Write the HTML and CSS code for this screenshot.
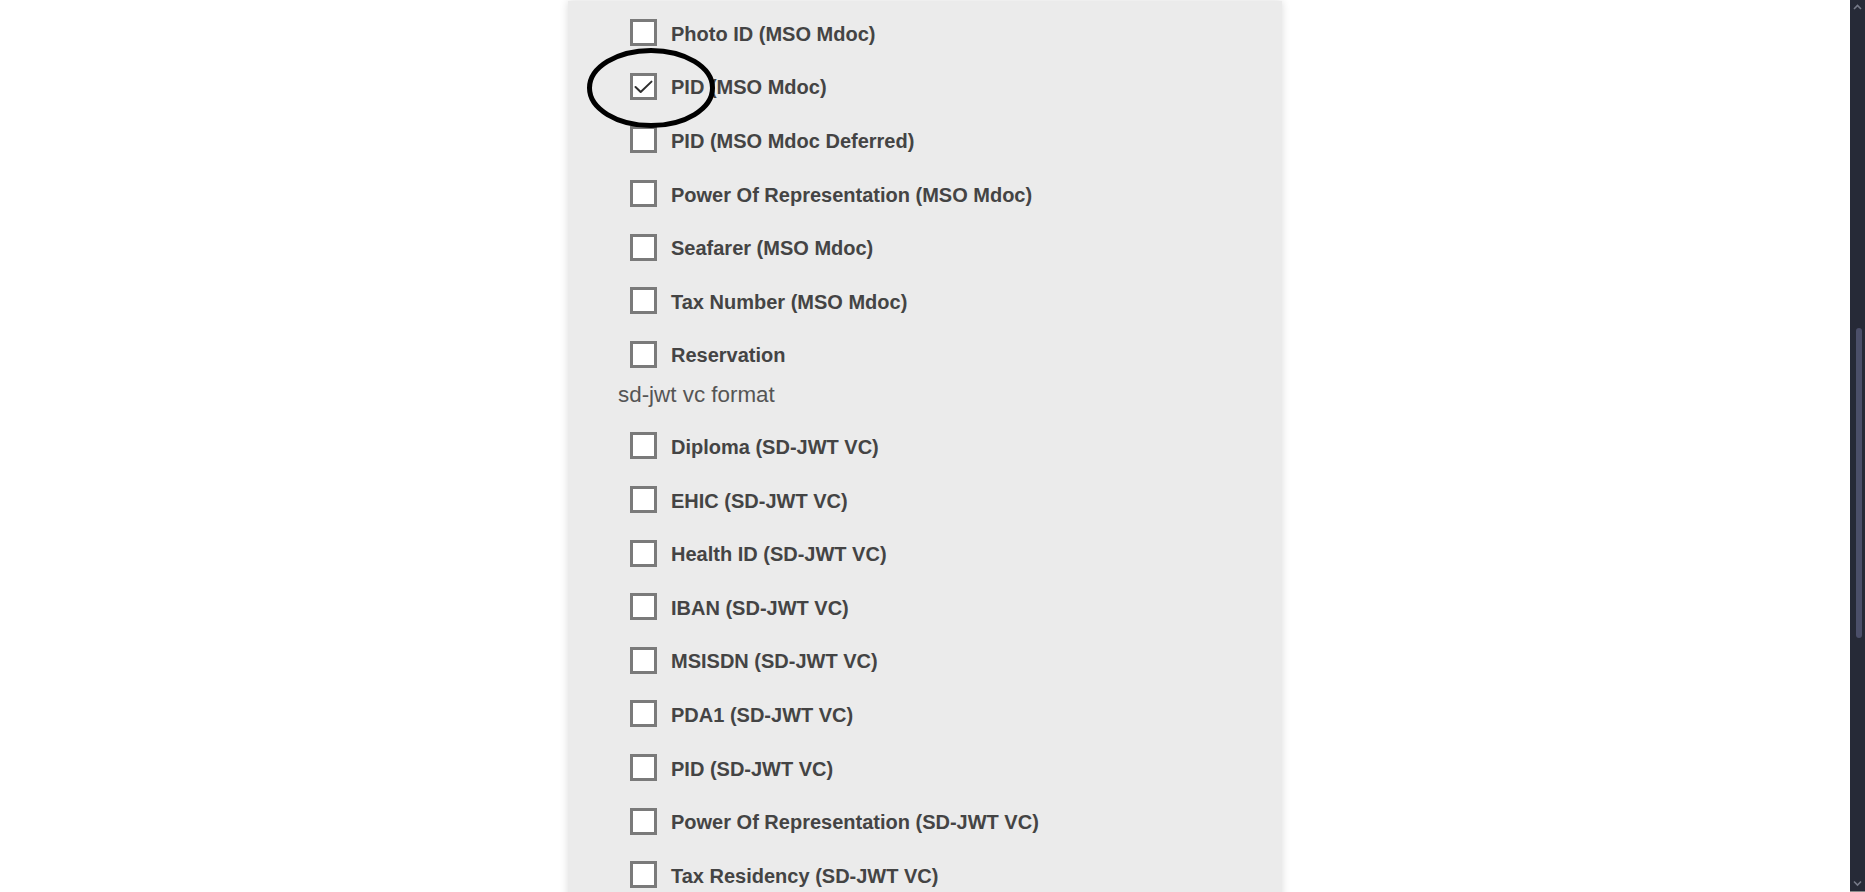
FILE: index.html
```html
<!DOCTYPE html>
<html lang="en">
<head>
<meta charset="utf-8">
<title>Credential selection</title>
<link rel="stylesheet" href="styles.css">
</head>
<body>
<main class="main">
  <section class="panel">
    <div class="row"><svg class="cb" viewBox="0 0 27 27"><rect x="1.5" y="1.5" width="24" height="24"/></svg><span class="lbl">Photo ID (MSO Mdoc)</span></div>
    <div class="row"><svg class="cb" viewBox="0 0 27 27"><rect x="1.5" y="1.5" width="24" height="24"/><polyline class="tick" points="5.5,14 10.7,19 21.5,8.6"/></svg><span class="lbl">PID (MSO Mdoc)</span></div>
    <div class="row"><svg class="cb" viewBox="0 0 27 27"><rect x="1.5" y="1.5" width="24" height="24"/></svg><span class="lbl">PID (MSO Mdoc Deferred)</span></div>
    <div class="row"><svg class="cb" viewBox="0 0 27 27"><rect x="1.5" y="1.5" width="24" height="24"/></svg><span class="lbl">Power Of Representation (MSO Mdoc)</span></div>
    <div class="row"><svg class="cb" viewBox="0 0 27 27"><rect x="1.5" y="1.5" width="24" height="24"/></svg><span class="lbl">Seafarer (MSO Mdoc)</span></div>
    <div class="row"><svg class="cb" viewBox="0 0 27 27"><rect x="1.5" y="1.5" width="24" height="24"/></svg><span class="lbl">Tax Number (MSO Mdoc)</span></div>
    <div class="row"><svg class="cb" viewBox="0 0 27 27"><rect x="1.5" y="1.5" width="24" height="24"/></svg><span class="lbl">Reservation</span></div>
    <p class="fmt">sd-jwt vc format</p>
    <div class="row"><svg class="cb" viewBox="0 0 27 27"><rect x="1.5" y="1.5" width="24" height="24"/></svg><span class="lbl">Diploma (SD-JWT VC)</span></div>
    <div class="row"><svg class="cb" viewBox="0 0 27 27"><rect x="1.5" y="1.5" width="24" height="24"/></svg><span class="lbl">EHIC (SD-JWT VC)</span></div>
    <div class="row"><svg class="cb" viewBox="0 0 27 27"><rect x="1.5" y="1.5" width="24" height="24"/></svg><span class="lbl">Health ID (SD-JWT VC)</span></div>
    <div class="row"><svg class="cb" viewBox="0 0 27 27"><rect x="1.5" y="1.5" width="24" height="24"/></svg><span class="lbl">IBAN (SD-JWT VC)</span></div>
    <div class="row"><svg class="cb" viewBox="0 0 27 27"><rect x="1.5" y="1.5" width="24" height="24"/></svg><span class="lbl">MSISDN (SD-JWT VC)</span></div>
    <div class="row"><svg class="cb" viewBox="0 0 27 27"><rect x="1.5" y="1.5" width="24" height="24"/></svg><span class="lbl">PDA1 (SD-JWT VC)</span></div>
    <div class="row"><svg class="cb" viewBox="0 0 27 27"><rect x="1.5" y="1.5" width="24" height="24"/></svg><span class="lbl">PID (SD-JWT VC)</span></div>
    <div class="row"><svg class="cb" viewBox="0 0 27 27"><rect x="1.5" y="1.5" width="24" height="24"/></svg><span class="lbl">Power Of Representation (SD-JWT VC)</span></div>
    <div class="row"><svg class="cb" viewBox="0 0 27 27"><rect x="1.5" y="1.5" width="24" height="24"/></svg><span class="lbl">Tax Residency (SD-JWT VC)</span></div>
    <svg class="mark" viewBox="0 0 128 80"><ellipse cx="64" cy="40" rx="61.5" ry="37.5"/></svg>
  </section>
</main>
<aside class="scrollbar">
  <div class="sb-btn"><svg viewBox="0 0 15 15"><polyline points="4,9 7.5,5.5 11,9"/></svg></div>
  <div class="sb-track"><div class="sb-thumb"></div></div>
  <div class="sb-btn"><svg viewBox="0 0 15 15"><polyline points="4,5.5 7.5,9 11,5.5"/></svg></div>
</aside>
</body>
</html>
```
FILE: styles.css
```css
html, body {
  margin: 0;
  padding: 0;
}
body {
  height: 892px;
  overflow: hidden;
  display: flex;
  background: #fff;
  font-family: "Liberation Sans", Arial, sans-serif;
}
.main {
  flex: 1;
  display: flex;
  justify-content: center;
  align-items: flex-start;
}
.panel {
  position: relative;
  width: 714px;
  margin-top: 1px;
  padding: 6.5px 0 60px 50px;
  box-sizing: border-box;
  background: #ebebeb;
  box-shadow: 0 0 8px rgba(0, 0, 0, 0.14);
}
.row {
  display: flex;
  align-items: center;
  gap: 14px;
  height: 53.6px;
  padding-left: 12px;
}
.cb {
  flex: none;
  width: 27px;
  height: 27px;
  margin-bottom: 3px;
}
.cb rect {
  fill: #fff;
  stroke: #7a7a7a;
  stroke-width: 3;
}
.cb .tick {
  fill: none;
  stroke: #2d2d2d;
  stroke-width: 2;
  stroke-linecap: round;
  stroke-linejoin: round;
}
.lbl {
  font-size: 20px;
  font-weight: bold;
  color: #444;
  white-space: nowrap;
}
.fmt {
  margin: 0;
  font-size: 22.4px;
  line-height: 24px;
  padding-bottom: 14px;
  color: #555;
}
.mark {
  position: absolute;
  left: 19px;
  top: 47px;
  width: 128px;
  height: 80px;
  overflow: visible;
}
.mark ellipse {
  fill: none;
  stroke: #000;
  stroke-width: 5;
}
.scrollbar {
  flex: none;
  width: 15px;
  height: 892px;
  box-sizing: border-box;
  display: flex;
  flex-direction: column;
  background: #262a37;
  border-bottom: 1px solid #8c8c8c;
}
.sb-btn {
  height: 15px;
  flex: none;
}
.sb-btn svg {
  display: block;
  width: 15px;
  height: 15px;
}
.sb-btn polyline {
  fill: none;
  stroke: #767a88;
  stroke-width: 1.6;
}
.sb-track {
  flex: 1;
  padding-top: 313px;
}
.sb-thumb {
  width: 6px;
  height: 310px;
  margin-left: 6px;
  border-radius: 3px;
  background: #4b4f69;
}
```
